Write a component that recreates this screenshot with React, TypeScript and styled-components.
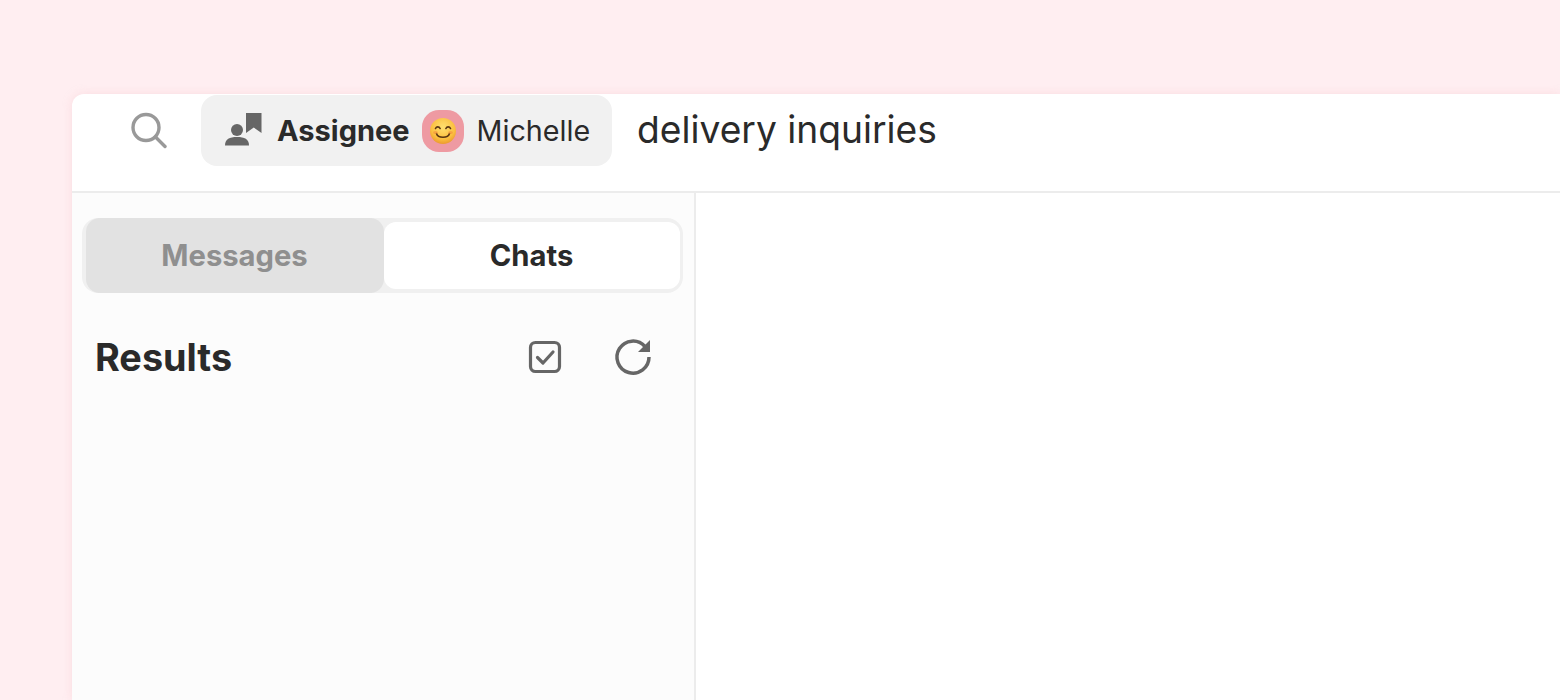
import styled, { createGlobalStyle } from 'styled-components';

const GlobalStyle = createGlobalStyle`
  html, body {
    margin: 0;
    height: 100%;
    background: #ffeef1;
    overflow: hidden;
  }
  body {
    font-family: Inter, "Liberation Sans", sans-serif;
    color: #2a2a2a;
  }
`;

const Page = styled.div`
  height: 700px;
  padding: 94px 0 0 72px;
  box-sizing: border-box;
`;

const Window = styled.div`
  height: 606px;
  background: #fff;
  border-top-left-radius: 12px;
  display: flex;
  flex-direction: column;
  box-shadow: 0 0 10px rgba(240, 190, 195, 0.35);
`;

const SearchBar = styled.header`
  height: 99px;
  box-sizing: border-box;
  flex-shrink: 0;
  display: flex;
  align-items: flex-start;
  padding: 1px 0 0 57px;
  border-bottom: 2px solid #ececec;
`;

const SearchIcon = styled.svg`
  width: 38px;
  height: 38px;
  margin-top: 16px;
  color: #999;
  flex-shrink: 0;
`;

const FilterChip = styled.div`
  display: flex;
  align-items: center;
  width: 411px;
  height: 71px;
  box-sizing: border-box;
  margin-left: 34px;
  padding-left: 24px;
  background: #f1f1f1;
  border-radius: 16px;
`;

const ChipIcon = styled.svg`
  width: 37px;
  height: 34px;
  margin-top: -2px;
  color: #666;
  flex-shrink: 0;
`;

const ChipLabel = styled.span`
  margin-left: 15px;
  font-size: 29px;
  font-weight: 700;
  line-height: 34px;
`;

const Avatar = styled.span`
  width: 42px;
  height: 42px;
  margin-left: 12px;
  border-radius: 17px;
  background: #ee9aa2;
  display: flex;
  align-items: center;
  justify-content: center;
  flex-shrink: 0;
`;

const ChipValue = styled.span`
  margin-left: 13px;
  font-size: 28.700px;
  font-weight: 400;
  line-height: 34px;
`;

const Query = styled.span`
  margin: 11px 0 0 25px;
  font-size: 37.200px;
  line-height: 48px;
  font-weight: 400;
`;

const Body = styled.div`
  flex: 1;
  display: flex;
  min-height: 0;
`;

const Sidebar = styled.aside`
  width: 624px;
  box-sizing: border-box;
  padding: 25px 11px 0 10px;
  background: #fcfcfc;
  border-right: 2px solid #ececec;
`;

const Tabs = styled.div`
  display: grid;
  grid-template-columns: 302px 1fr;
  height: 75px;
  box-sizing: border-box;
  padding-right: 3px;
  background: #f0f0f0;
  border-radius: 16px;
`;

const Tab = styled.button<{ $active?: boolean }>`
  border: 0;
  padding: 0 1px 1px 0;
  font-family: inherit;
  font-size: 29.200px;
  font-weight: 700;
  color: ${(p) => (p.$active ? '#2a2a2a' : '#8f8f8f')};
  background: ${(p) => (p.$active ? '#fff' : '#e2e2e2')};
  border-radius: ${(p) => (p.$active ? '12px' : '14px')};
  margin: ${(p) => (p.$active ? '4px 0' : '0 0 0 4px')};
`;

const ResultsRow = styled.div`
  display: flex;
  align-items: center;
  height: 40px;
  margin-top: 44px;
  padding-left: 13px;
`;

const ResultsTitle = styled.h2`
  flex: 1;
  margin: -1px 0 0;
  font-size: 37.800px;
  font-weight: 700;
`;

const ActionIcon = styled.svg<{ $gap?: number }>`
  width: 40px;
  height: 40px;
  color: #666;
  margin-right: ${(p) => p.$gap ?? 0}px;
  flex-shrink: 0;
`;

const Detail = styled.main`
  flex: 1;
  background: #fff;
`;

function SmileEmoji() {
  return (
    <svg width="28" height="28" viewBox="0 0 28 28">
      <defs>
        <radialGradient id="face" cx="50%" cy="35%" r="70%">
          <stop offset="0%" stopColor="#ffdf70" />
          <stop offset="65%" stopColor="#fbbf3f" />
          <stop offset="100%" stopColor="#e8912a" />
        </radialGradient>
      </defs>
      <circle cx="14" cy="14" r="13" fill="url(#face)" />
      <path d="M6.500 11.500c1-2.200 3.600-2.200 4.600 0M16.900 11.500c1-2.200 3.600-2.200 4.600 0" fill="none" stroke="#5a3512" strokeWidth="1.600" strokeLinecap="round" />
      <path d="M7.500 16.500c1.500 5 11.500 5 13 0" fill="none" stroke="#5a3512" strokeWidth="1.600" strokeLinecap="round" />
      <ellipse cx="6.500" cy="15.500" rx="2.400" ry="1.500" fill="#f2883a" opacity="0.55" />
      <ellipse cx="21.500" cy="15.500" rx="2.400" ry="1.500" fill="#f2883a" opacity="0.55" />
    </svg>
  );
}

export default function App() {
  return (
    <>
      <GlobalStyle />
      <Page>
        <Window>
          <SearchBar>
            <SearchIcon viewBox="0 0 38 38" fill="none" stroke="currentColor" strokeWidth="3.400" strokeLinecap="round">
              <circle cx="17" cy="16.500" r="13" />
              <path d="M26.500 26l9.500 9.500" />
            </SearchIcon>
            <FilterChip>
              <ChipIcon viewBox="0 0 37 34" fill="currentColor">
                <circle cx="12" cy="17" r="6" />
                <path d="M0 32.500c0-6.500 4.500-8.500 12-8.500s12 2 12 8.500z" />
                <path d="M21 0h15.500v20l-7.750-5.500L21 20z" />
              </ChipIcon>
              <ChipLabel>Assignee</ChipLabel>
              <Avatar>
                <SmileEmoji />
              </Avatar>
              <ChipValue>Michelle</ChipValue>
            </FilterChip>
            <Query>delivery inquiries</Query>
          </SearchBar>
          <Body>
            <Sidebar>
              <Tabs>
                <Tab>Messages</Tab>
                <Tab $active>Chats</Tab>
              </Tabs>
              <ResultsRow>
                <ResultsTitle>Results</ResultsTitle>
                <ActionIcon viewBox="0 0 40 40" fill="none" stroke="currentColor" strokeWidth="3.200" $gap={48}>
                  <rect x="5.500" y="5.500" width="29" height="29" rx="5" />
                  <path d="M12.500 20.500l5.500 5.500 10-11" strokeWidth="3.200" strokeLinecap="round" strokeLinejoin="round" />
                </ActionIcon>
                <ActionIcon viewBox="0 0 40 40" fill="none" stroke="currentColor" strokeWidth="3.500" $gap={30}>
                  <path d="M32 9.500A16 16 0 1 0 36 20" />
                  <path d="M37 3v12H25z" fill="currentColor" stroke="none" />
                </ActionIcon>
              </ResultsRow>
            </Sidebar>
            <Detail />
          </Body>
        </Window>
      </Page>
    </>
  );
}
